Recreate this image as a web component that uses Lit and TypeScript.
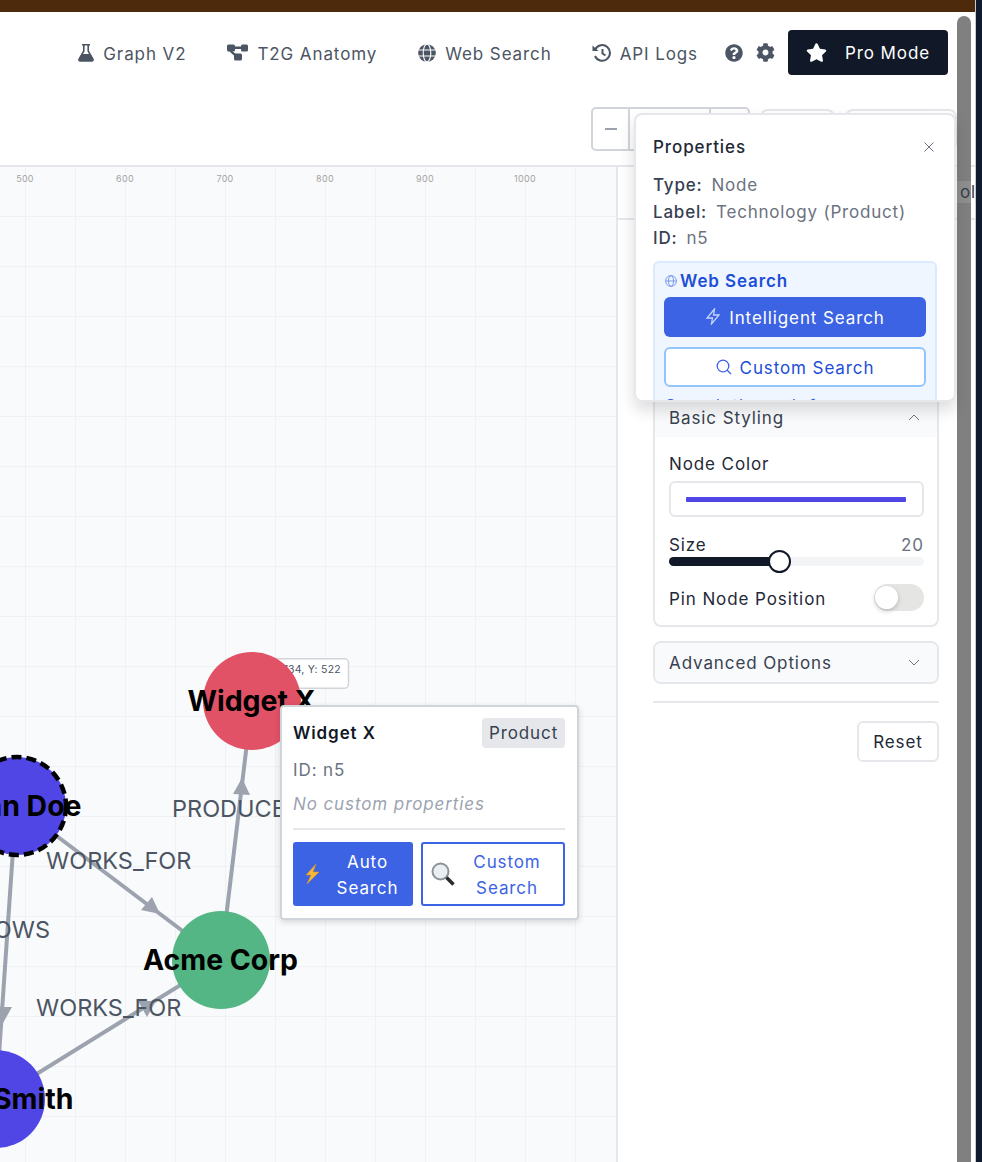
import { LitElement, html, css, svg } from "lit";
import { customElement } from "lit/decorators.js";

const STAR = "M259.3 17.8L194 150.2 47.9 171.5c-26.2 3.8-36.7 36.1-17.7 54.6l105.7 103-25 145.5c-4.5 26.3 23.2 46 46.4 33.7L288 439.6l130.7 68.7c23.2 12.2 50.9-7.4 46.4-33.7l-25-145.5 105.7-103c19-18.5 8.5-50.8-17.7-54.6L382 150.2 316.7 17.8c-11.7-23.6-45.6-23.9-57.4 0z";
const COG = "M487.4 315.7l-42.6-24.6c4.3-23.2 4.3-47 0-70.2l42.6-24.6c4.9-2.8 7.1-8.6 5.5-14-11.1-35.6-30-67.8-54.7-94.6-3.8-4.1-10-5.1-14.8-2.3L380.8 110c-17.9-15.4-38.5-27.3-60.8-35.1V25.8c0-5.6-3.9-10.5-9.4-11.7-36.7-8.2-74.3-7.8-109.2 0-5.5 1.2-9.4 6.1-9.4 11.7V75c-22.2 7.9-42.8 19.8-60.8 35.1L88.7 85.5c-4.9-2.8-11-1.9-14.8 2.3-24.7 26.7-43.6 58.9-54.7 94.6-1.7 5.4.6 11.2 5.5 14L67.3 221c-4.3 23.2-4.3 47 0 70.2l-42.6 24.6c-4.9 2.8-7.1 8.6-5.5 14 11.1 35.6 30 67.8 54.7 94.6 3.8 4.1 10 5.1 14.8 2.3l42.6-24.6c17.9 15.4 38.5 27.3 60.8 35.1v49.2c0 5.6 3.9 10.5 9.4 11.7 36.7 8.2 74.3 7.8 109.2 0 5.5-1.2 9.4-6.1 9.4-11.7v-49.2c22.2-7.9 42.8-19.8 60.8-35.1l42.6 24.6c4.9 2.8 11 1.9 14.8-2.3 24.7-26.7 43.6-58.9 54.7-94.6 1.5-5.5-.7-11.3-5.6-14.1zM256 336c-44.1 0-80-35.9-80-80s35.9-80 80-80 80 35.9 80 80-35.9 80-80 80z";
const QUESTION = "M504 256c0 136.997-111.043 248-248 248S8 392.997 8 256C8 119.083 119.043 8 256 8s248 111.083 248 248zM262.655 90c-54.497 0-89.255 22.957-116.549 63.758-3.536 5.286-2.353 12.415 2.715 16.258l34.699 26.31c5.205 3.947 12.621 3.008 16.665-2.122 17.864-22.658 30.113-35.797 57.303-35.797 20.429 0 45.698 13.148 45.698 32.958 0 14.976-12.363 22.667-32.534 33.976C247.128 238.528 216 254.941 216 296v4c0 6.627 5.373 12 12 12h56c6.627 0 12-5.373 12-12v-1.333c0-28.462 83.186-29.647 83.186-106.667 0-58.002-60.165-102-116.531-102zM256 338c-25.365 0-46 20.635-46 46 0 25.364 20.635 46 46 46s46-20.636 46-46c0-25.365-20.635-46-46-46z";

const vLines = Array.from({ length: 12 }, (_, i) => 25 + i * 50);
const hLines = Array.from({ length: 20 }, (_, i) => 49.5 + i * 50);
const ruler = [500, 600, 700, 800, 900, 1000];

const graph = svg`
  ${vLines.map((x) => svg`<line x1=${x + 0.5} x2=${x + 0.5} y1="0" y2="1000" class="grid"></line>`)}
  ${hLines.map((y) => svg`<line x1="0" x2="616" y1=${y} y2=${y} class="grid"></line>`)}
  ${ruler.map((v) => svg`<text x=${v - 475} y="15" class="tick" text-anchor="middle">${v}</text>`)}
  <g class="edge">
    <line x1="221" y1="793" x2="252" y2="534"></line>
    <line x1="17" y1="639" x2="221" y2="793"></line>
    <line x1="16" y1="639" x2="-4" y2="932"></line>
    <line x1="-4" y1="932" x2="221" y2="793"></line>
  </g>
  <g class="arrow">
    <polygon points="242,611 233,627 250,628"></polygon>
    <polygon points="160,747 141,743 152,730"></polygon>
    <polygon points="3,856 -6,840 12,840"></polygon>
    <polygon points="156,834 138,834 147,850"></polygon>
  </g>
  <g class="elabel">
    <text x="172" y="650">PRODUCES</text>
    <text x="46" y="702">WORKS_FOR</text>
    <text x="36" y="849">WORKS_FOR</text>
    <text x="50" y="771" text-anchor="end">FOLLOWS</text>
  </g>
`;

const nodes = svg`
  <rect x="253" y="491.75" width="95.5" height="29.5" rx="4" class="coord"></rect>
  <text x="341" y="506" text-anchor="end" class="coordt">X: 734, Y: 522</text>
  <circle cx="252" cy="534" r="49" fill="#e25266"></circle>
  <circle cx="221" cy="793" r="49" fill="#54b685"></circle>
  <circle cx="17" cy="639" r="49" fill="#4f46e5" stroke="#000" stroke-width="4.500" stroke-dasharray="10 5"></circle>
  <circle cx="-4" cy="932" r="49" fill="#4f46e5"></circle>
  <g class="nlabel">
    <text x="251.500" y="544">Widget X</text>
    <text x="220.500" y="803">Acme Corp</text>
    <text x="16" y="649">John Doe</text>
    <text x="-4" y="942">Jane Smith</text>
  </g>
`;

@customElement("app-root")
export class AppRoot extends LitElement {
  static styles = css`
    :host {
      display: block;
      position: relative;
      width: 982px;
      height: 1162px;
      overflow: hidden;
      background: #fff;
      font-family: Inter, "Liberation Sans", sans-serif;
      color: #374151;
      font-size: 17px;
      letter-spacing: 0.9px;
    }
    .shell { display: flex; height: 100%; }
    .page { width: 975px; display: flex; flex-direction: column; }
    .edge-strip { flex: 1; background: #111b30; border-left: 1px solid #c9cbcf; }
    .band { height: 12px; flex: none; background: #4d2a0c; }
    .nav {
      height: 83px; flex: none; display: flex; align-items: center;
      justify-content: flex-end; padding: 0 27px 2px 0; box-sizing: border-box;
    }
    .link { display: flex; align-items: center; gap: 9px; color: #4b5563; line-height: 24px; padding-top: 2px; }
    .link svg { margin-top: -2px; }
    .nav svg { fill: #4b5563; display: block; }
    .pro {
      width: 160px; height: 45px; display: flex; align-items: center; box-sizing: border-box;
      padding-left: 18px; gap: 18px; background: #111827; color: #fff; border-radius: 4px;
      margin-left: 13px;
    }
    .pro span { padding-top: 1px; }
    .nav .pro svg { fill: #fff; }
    .toolbar {
      height: 72px; flex: none; box-sizing: border-box; display: flex; align-items: flex-start;
      justify-content: flex-end; padding: 12px 18px 0 0; gap: 10px;
      border-bottom: 2px solid #e5e7eb;
    }
    .zoom { display: flex; height: 44px; box-sizing: border-box; border: 2px solid #d1d5db; border-radius: 5px; }
    .zoom div { box-sizing: border-box; display: flex; align-items: center; justify-content: center; }
    .zoom .a { width: 37px; border-right: 2px solid #d1d5db; }
    .zoom .b { width: 81px; border-right: 2px solid #d1d5db; }
    .zoom .c { width: 37px; }
    .zoom .dash { width: 12px; height: 1.500px; background: #9ca3af; }
    .tbtn { height: 42px; margin-top: 2px; box-sizing: border-box; border: 2px solid #e5e7eb; border-radius: 8px; }
    .tbtn.one { width: 75px; }
    .tbtn.two { width: 112px; }
    .body { flex: 1; display: flex; min-height: 0; }
    .canvas {
      width: 618px; flex: none; box-sizing: border-box; border-right: 2px solid #e5e7eb;
      background: #f9fafb; position: relative; overflow: hidden;
    }
    .canvas svg { position: absolute; left: 0; top: 0; }
    .grid { stroke: #f0f1f4; stroke-width: 1; }
    .tick { font-size: 9px; fill: #a3a3a3; letter-spacing: 0.3px; }
    .edge line { stroke: #9ca3af; stroke-width: 4; }
    .arrow polygon { fill: #9ca3af; }
    .elabel text { font-size: 23.500px; fill: #4b5563; letter-spacing: 0; }
    .coord { fill: #fff; stroke: #d1d5db; stroke-width: 1.500; }
    .coordt { font-size: 10.500px; fill: #4b5563; letter-spacing: 0.25px; }
    .nlabel text { font-size: 28.400px; font-weight: 700; fill: #000; text-anchor: middle; letter-spacing: 0; }
    .side { flex: 1; min-width: 0; overflow: hidden; display: flex; flex-direction: column; }
    .tabs { height: 53px; flex: none; box-sizing: border-box; border-bottom: 2px solid #e5e7eb; }
    .tabtext {
      position: absolute; left: 957px; top: 181px; width: 18px; height: 22px; line-height: 22px;
      padding-left: 3px; box-sizing: border-box; color: #374151; background: rgba(255,255,255,.12);
      overflow: hidden; white-space: nowrap;
    }
    .content { display: flex; flex-direction: column; padding: 176px 36px 0 35px; width: 286px; box-sizing: content-box; }
    .card { border: 2px solid #e5e7eb; border-radius: 8px; overflow: hidden; }
    .head {
      display: flex; align-items: center; justify-content: space-between; background: #f9fafb;
      padding: 0 17px 0 14px; color: #374151;
    }
    .head.open { height: 39px; box-sizing: border-box; }
    .head.closed { height: 39px; }
    .head svg { fill: none; stroke: #6b7280; stroke-width: 1; display: block; }
    .fields { padding: 15px 13px 0 14px; height: 188px; box-sizing: border-box; }
    .fl { color: #1f2937; line-height: 24px; }
    .colorbox {
      height: 36px; margin-top: 5px; box-sizing: border-box; border: 2px solid #e5e7eb; border-radius: 6px;
      display: flex; align-items: center; padding: 0 16px 0 15px;
    }
    .colorbar { flex: 1; height: 5px; background: #4f46e5; border-radius: 1px; }
    .sizerow { display: flex; justify-content: space-between; margin-top: 16px; line-height: 24px; height: 24px; color: #1f2937; }
    .sizerow span:last-child { color: #6b7280; }
    .slider { height: 9px; margin-top: 0; background: #f3f4f6; border-radius: 5px; position: relative; }
    .fill { width: 110px; height: 9px; background: #111827; border-radius: 5px 0 0 5px; }
    .thumb {
      position: absolute; left: 99px; top: -7px; width: 23px; height: 23px; box-sizing: border-box;
      background: #fff; border: 2.500px solid #111827; border-radius: 50%;
    }
    .pinrow { display: flex; justify-content: space-between; align-items: center; margin-top: 18px; color: #1f2937; }
    .pinrow span { padding-top: 2px; }
    .toggle { width: 50px; height: 27px; border-radius: 14px; background: #e5e5e3; position: relative; }
    .knob {
      position: absolute; left: 1px; top: 2px; width: 23px; height: 23px; border-radius: 50%;
      background: #fff; box-shadow: 0 2px 5px rgba(0,0,0,.2);
    }
    .adv { margin-top: 14px; }
    .hr { height: 2px; background: #e5e7eb; margin-top: 17px; }
    .reset-row { display: flex; justify-content: flex-end; margin-top: 18px; }
    .reset {
      width: 82px; height: 41px; display: flex; align-items: center; justify-content: center; box-sizing: border-box;
      border: 2px solid #e5e7eb; border-radius: 6px; color: #1f2937;
    }
    .scroll {
      position: absolute; left: 957px; top: 16px; width: 14px; height: 1146px;
      background: #808080; border-radius: 7px 7px 0 0;
    }
    .popup {
      position: absolute; left: 634px; top: 113px; width: 322px; height: 289px; box-sizing: border-box;
      background: #fff; border: 2px solid #e5e7eb; border-radius: 8px; overflow: hidden;
      padding: 20px 17px 0;
    }
    .shadow {
      position: absolute; left: 634px; top: 113px; width: 322px; height: 289px; border-radius: 8px;
      box-shadow: 0 8px 16px rgba(0,0,0,.14);
    }
    .phead { display: flex; justify-content: space-between; align-items: center; height: 24px; color: #1f2937; font-weight: 500; }
    .phead svg { stroke: #6b7280; fill: none; stroke-width: 1; margin-right: 3px; display: block; }
    .kv { line-height: 26.500px; color: #6b7280; white-space: nowrap; letter-spacing: 0.8px; }
    .kv b { font-weight: 500; color: #374151; margin-right: 9px; }
    .rows { margin-top: 13px; }
    .ws {
      margin-top: 9px; background: #eff6ff; border: 2px solid #dbeafe; border-radius: 6px;
      padding: 6px 9px 0; height: 200px; box-sizing: border-box;
    }
    .wst { display: flex; align-items: center; gap: 3px; height: 24px; color: #1d4ed8; font-weight: 600; padding-left: 1px; }
    .wst svg { stroke: #7d9ae8; fill: none; stroke-width: 1; display: block; }
    .wbtn {
      height: 40px; display: flex; align-items: center; justify-content: center; gap: 8px; box-sizing: border-box;
      border-radius: 6px; line-height: 24px;
    }
    .wbtn span { padding-top: 2px; }
    .wbtn.p { background: #3b63e4; color: #fff; margin-top: 4px; }
    .wbtn.p svg { stroke: #c7d5f8; fill: none; stroke-width: 1.300; display: block; }
    .wbtn.s { background: #fff; color: #1d4ed8; border: 2px solid #93c5fd; margin-top: 10px; }
    .wbtn.s svg { stroke: #3b63e4; fill: none; stroke-width: 1.300; display: block; }
    .wsnote { color: #3b63e4; margin-top: 7px; line-height: 24px; padding-left: 1px; white-space: nowrap; }
    .tip {
      position: absolute; left: 280px; top: 705px; width: 299px; height: 215px; box-sizing: border-box;
      background: #fff; border: 2px solid #d1d5db; border-radius: 4px; box-shadow: 0 2px 6px rgba(0,0,0,.15);
      padding: 10px 12px 0 11px;
    }
    .thead { display: flex; justify-content: space-between; align-items: center; height: 32px; }
    .tname { font-weight: 600; color: #111827; }
    .badge { width: 83px; height: 30px; background: #e5e7eb; border-radius: 4px; display: flex; align-items: center; justify-content: center; color: #374151; }
    .tid { color: #6b7280; margin-top: 9px; line-height: 24px; }
    .tnone { color: #9ca3af; font-style: italic; margin-top: 10px; line-height: 24px; }
    .thr { height: 2px; background: #e5e7eb; margin-top: 12px; }
    .tbtns { display: flex; gap: 8px; margin-top: 12px; }
    .tb {
      height: 64px; display: flex; align-items: center; box-sizing: border-box; border-radius: 3px;
      line-height: 26px; text-align: center;
    }
    .tb.auto { width: 120px; background: #3b63e4; color: #fff; padding: 0 0 0 11px; }
    .tb.cust { width: 144px; background: #fff; color: #3b63e4; border: 2px solid #3b63e4; padding: 0 4px 0 8px; }
    .tb span { flex: 1; padding-top: 2px; }
    .tb svg { display: block; flex: none; }
    .gap41 { margin-right: 41px; }
    .gap40 { margin-right: 40px; }
    .help { margin-left: 27px; }
    .gear { margin-left: 13px; }
  `;

  render() {
    return html`
      <div class="shell">
        <div class="page">
          <div class="band"></div>
          <div class="nav">
            <div class="link gap41">
              <svg width="16" height="18" viewBox="0 0 16 18"><path d="M4 0h8v1.6h-1v5.2l4.6 8a2 2 0 0 1-1.8 3H2.2a2 2 0 0 1-1.8-3l4.6-8V1.6H4zM6.6 1.6v5.6L5 10h6L9.4 7.200V1.600z" fill-rule="evenodd"></path></svg>
              Graph V2
            </div>
            <div class="link gap41">
              <svg width="21" height="17" viewBox="0 0 21 17"><rect x="0" y="0.500" width="8" height="7" rx="1.500"></rect><rect x="14" y="0.500" width="7" height="7" rx="1.500"></rect><rect x="7" y="9.500" width="8" height="7" rx="1.500"></rect><path d="M6 2.500h9v2.500H6zM4 6l5.500 4.500-1.500 2-5.500-5z"></path></svg>
              T2G Anatomy
            </div>
            <div class="link gap40">
              <svg width="18" height="18" viewBox="0 0 18 18"><circle cx="9" cy="9" r="8.800"></circle><g fill="none" stroke="#fff" stroke-width="1.100"><ellipse cx="9" cy="9" rx="3.800" ry="8.800"></ellipse><path d="M0 6h18M0 12h18"></path></g></svg>
              Web Search
            </div>
            <div class="link">
              <svg width="19" height="18" viewBox="0 0 19 18"><g fill="none" stroke="#4b5563" stroke-width="2"><path d="M3.300 5.200A7.800 7.800 0 1 1 3 12"></path><path d="M10.500 5v4.500l3 2"></path></g><path d="M0.500 1.500 6.500 7H0.500z"></path></svg>
              API Logs
            </div>
            <svg class="help" width="18" height="18" viewBox="0 0 512 512"><path d=${QUESTION}></path></svg>
            <svg class="gear" width="19" height="19" viewBox="0 0 512 512"><path d=${COG}></path></svg>
            <div class="pro">
              <svg width="21" height="19" viewBox="0 0 576 512"><path d=${STAR}></path></svg>
              <span>Pro Mode</span>
            </div>
          </div>
          <div class="toolbar">
            <div class="zoom">
              <div class="a"><div class="dash"></div></div><div class="b"></div><div class="c"></div>
            </div>
            <div class="tbtn one"></div>
            <div class="tbtn two"></div>
          </div>
          <div class="body">
            <div class="canvas">
              <svg width="616" height="995" viewBox="0 0 616 995">${graph}${nodes}</svg>
            </div>
            <div class="side">
              <div class="tabs"></div>
              <div class="content">
                <div class="card">
                  <div class="head open">Basic Styling
                    <svg width="12" height="7" viewBox="0 0 12 7"><path d="M1 6 6 1l5 5"></path></svg>
                  </div>
                  <div class="fields">
                    <div class="fl">Node Color</div>
                    <div class="colorbox"><div class="colorbar"></div></div>
                    <div class="sizerow"><span>Size</span><span>20</span></div>
                    <div class="slider"><div class="fill"></div><div class="thumb"></div></div>
                    <div class="pinrow"><span>Pin Node Position</span><div class="toggle"><div class="knob"></div></div></div>
                  </div>
                </div>
                <div class="card adv">
                  <div class="head closed">Advanced Options
                    <svg width="12" height="7" viewBox="0 0 12 7"><path d="M1 1l5 5 5-5"></path></svg>
                  </div>
                </div>
                <div class="hr"></div>
                <div class="reset-row"><div class="reset">Reset</div></div>
              </div>
            </div>
          </div>
        </div>
        <div class="edge-strip"></div>
      </div>
      <div class="scroll"></div>
      <div class="tabtext">ol</div>
      <div class="shadow"></div>
      <div class="popup">
        <div class="phead">Properties
          <svg width="10" height="10" viewBox="0 0 10 10"><path d="M.5.5l9 9M9.500.5l-9 9"></path></svg>
        </div>
        <div class="rows">
          <div class="kv"><b>Type:</b>Node</div>
          <div class="kv"><b>Label:</b>Technology (Product)</div>
          <div class="kv"><b>ID:</b>n5</div>
        </div>
        <div class="ws">
          <div class="wst">
            <svg width="12" height="12" viewBox="0 0 12 12"><circle cx="6" cy="6" r="5.400"></circle><ellipse cx="6" cy="6" rx="2.500" ry="5.400"></ellipse><path d="M.6 6h10.800"></path></svg>
            Web Search
          </div>
          <div class="wbtn p">
            <svg width="16" height="17" viewBox="0 0 16 17"><path d="M9.500 1 2 10h5.500l-1 6L14 7H8.500z"></path></svg>
            <span>Intelligent Search</span>
          </div>
          <div class="wbtn s">
            <svg width="16" height="16" viewBox="0 0 16 16"><circle cx="7" cy="7" r="5.800"></circle><path d="M11.200 11.200 15 15"></path></svg>
            <span>Custom Search</span>
          </div>
          <div class="wsnote">Search the web for</div>
        </div>
      </div>
      <div class="tip">
        <div class="thead"><span class="tname">Widget X</span><span class="badge">Product</span></div>
        <div class="tid">ID: n5</div>
        <div class="tnone">No custom properties</div>
        <div class="thr"></div>
        <div class="tbtns">
          <div class="tb auto">
            <svg width="18" height="22" viewBox="0 0 18 22"><path d="M12 1 2 12h5l-4 9 12-12H9z" fill="#f5b93a" stroke="#d68f20" stroke-width=".6"></path></svg>
            <span>Auto Search</span>
          </div>
          <div class="tb cust">
            <svg width="24" height="24" viewBox="0 0 24 24"><circle cx="9.500" cy="9.500" r="8" fill="#e9eef2" stroke="#8c9298" stroke-width="2"></circle><path d="M15.500 15.500 22.500 22.500" stroke="#2b2b2b" stroke-width="3.500"></path></svg>
            <span>Custom Search</span>
          </div>
        </div>
      </div>
    `;
  }
}
